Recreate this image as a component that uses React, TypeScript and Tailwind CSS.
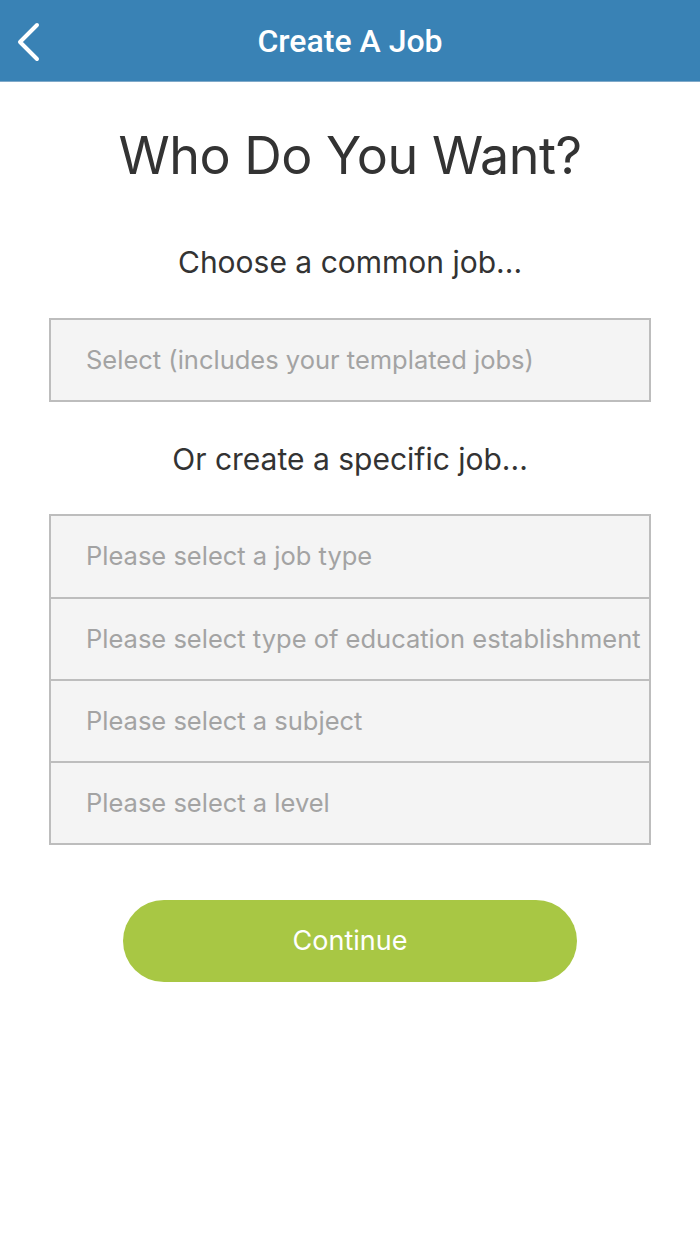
import React from 'react';

const fields = [
  'Please select a job type',
  'Please select type of education establishment',
  'Please select a subject',
  'Please select a level',
];

const App: React.FC = () => {
  return (
    <div className="min-h-[1244px] w-[700px] bg-white font-['Roboto',sans-serif] text-[#333333]">
      <header className="relative flex h-[82px] items-center justify-center border-b border-[#7fa9c9] bg-[#3982b5]">
        <button className="absolute left-[14px] top-[22px] flex h-[40px] w-[28px] items-center justify-center">
          <svg width="26" height="40" viewBox="0 0 26 40" fill="none">
            <path d="M22 3 L5 20 L22 37" stroke="white" strokeWidth="4" strokeLinecap="round" strokeLinejoin="round" />
          </svg>
        </button>
        <h1 className="text-[32px] font-medium text-white">Create A Job</h1>
      </header>

      <main className="flex flex-col items-center px-[49px]">
        <h2 className="mt-[44px] text-[52px] leading-[60px] font-['Inter',sans-serif] font-normal tracking-[-0.5px] text-[#333333]">
          Who Do You Want?
        </h2>

        <p className="mt-[59px] text-[30px] leading-[34px] font-['Inter',sans-serif] text-[#333333]">
          Choose a common job...
        </p>

        <div className="mt-[39px] flex h-[84px] w-full items-center border-2 border-[#bdbdbd] bg-[#f4f4f4] pl-[35px]">
          <span className="text-[25.5px] text-[#a3a3a3] font-['Inter',sans-serif]">Select (includes your templated jobs)</span>
        </div>

        <p className="mt-[40px] text-[30px] leading-[34px] font-['Inter',sans-serif] text-[#333333]">
          Or create a specific job...
        </p>

        <div className="mt-[38px] flex w-full flex-col border-2 border-[#bdbdbd] bg-[#f4f4f4]">
          {fields.map((f, i) => (
            <div
              key={f}
              className={`flex items-center pl-[35px] ${i > 0 ? 'h-[82px] border-t-2 border-[#bdbdbd]' : 'h-[81px]'}`}
            >
              <span className="whitespace-nowrap text-[25.5px] text-[#a3a3a3] font-['Inter',sans-serif]">{f}</span>
            </div>
          ))}
        </div>

        <button className="mt-[55px] flex h-[82px] w-[454px] items-center justify-center rounded-full bg-[#a8c744]">
          <span className="text-[27px] text-white font-['Inter',sans-serif]">Continue</span>
        </button>
      </main>
    </div>
  );
};

export default App;
